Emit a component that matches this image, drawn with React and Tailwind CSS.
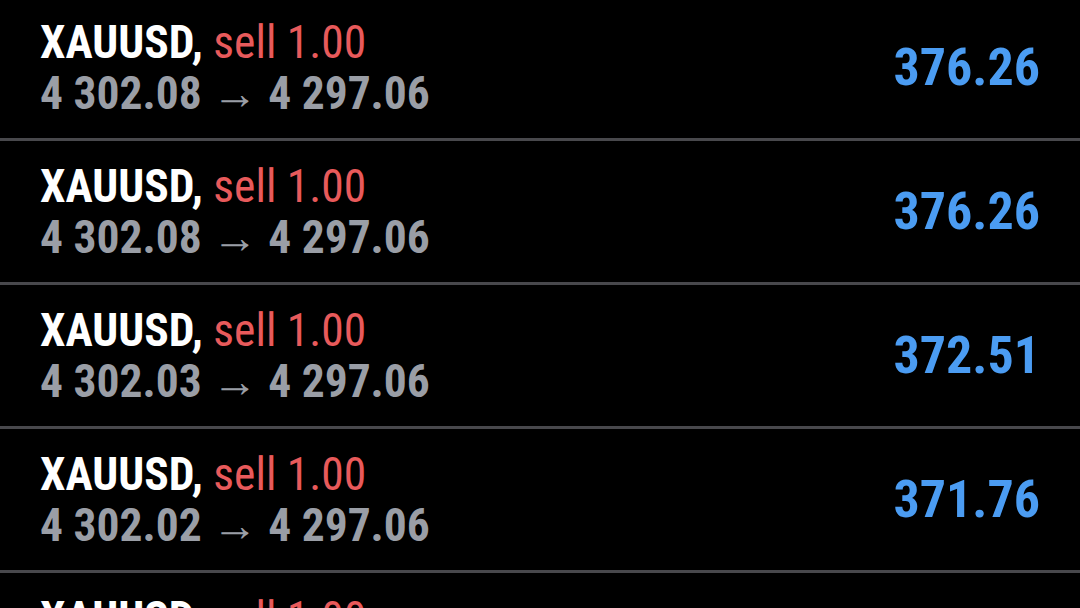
import React from "react";

const trades = [
  { symbol: "XAUUSD", side: "sell", volume: "1.00", open: "4 302.08", close: "4 297.06", profit: "376.26" },
  { symbol: "XAUUSD", side: "sell", volume: "1.00", open: "4 302.08", close: "4 297.06", profit: "376.26" },
  { symbol: "XAUUSD", side: "sell", volume: "1.00", open: "4 302.03", close: "4 297.06", profit: "372.51" },
  { symbol: "XAUUSD", side: "sell", volume: "1.00", open: "4 302.02", close: "4 297.06", profit: "371.76" },
  { symbol: "XAUUSD", side: "sell", volume: "1.00", open: "4 302.02", close: "4 297.06", profit: "371.76" },
];

function TradeRow({ trade }) {
  return (
    <div className="flex items-center justify-between h-[144px] border-b-[3px] border-[#48484c] pl-[40px] pr-[40px]">
      <div className="flex flex-col">
        <p className="text-[45.5px] leading-[51px] whitespace-nowrap">
          <span className="text-white font-bold">{trade.symbol},</span>{" "}
          <span className="text-[#e85a5b]">
            {trade.side} {trade.volume}
          </span>
        </p>
        <p className="text-[45.5px] leading-[51px] text-[#9a9ea6] font-bold whitespace-nowrap">
          {trade.open} → {trade.close}
        </p>
      </div>
      <p className="text-[52px] font-bold text-[#4b9cf2]">{trade.profit}</p>
    </div>
  );
}

export default function App() {
  return (
    <div
      className="w-[1080px] h-[608px] bg-black overflow-hidden"
      style={{ fontFamily: '"Roboto Condensed", Roboto, sans-serif' }}
    >
      <div className="-mt-[3px]">
        {trades.map((t, i) => (
          <TradeRow key={i} trade={t} />
        ))}
      </div>
    </div>
  );
}
